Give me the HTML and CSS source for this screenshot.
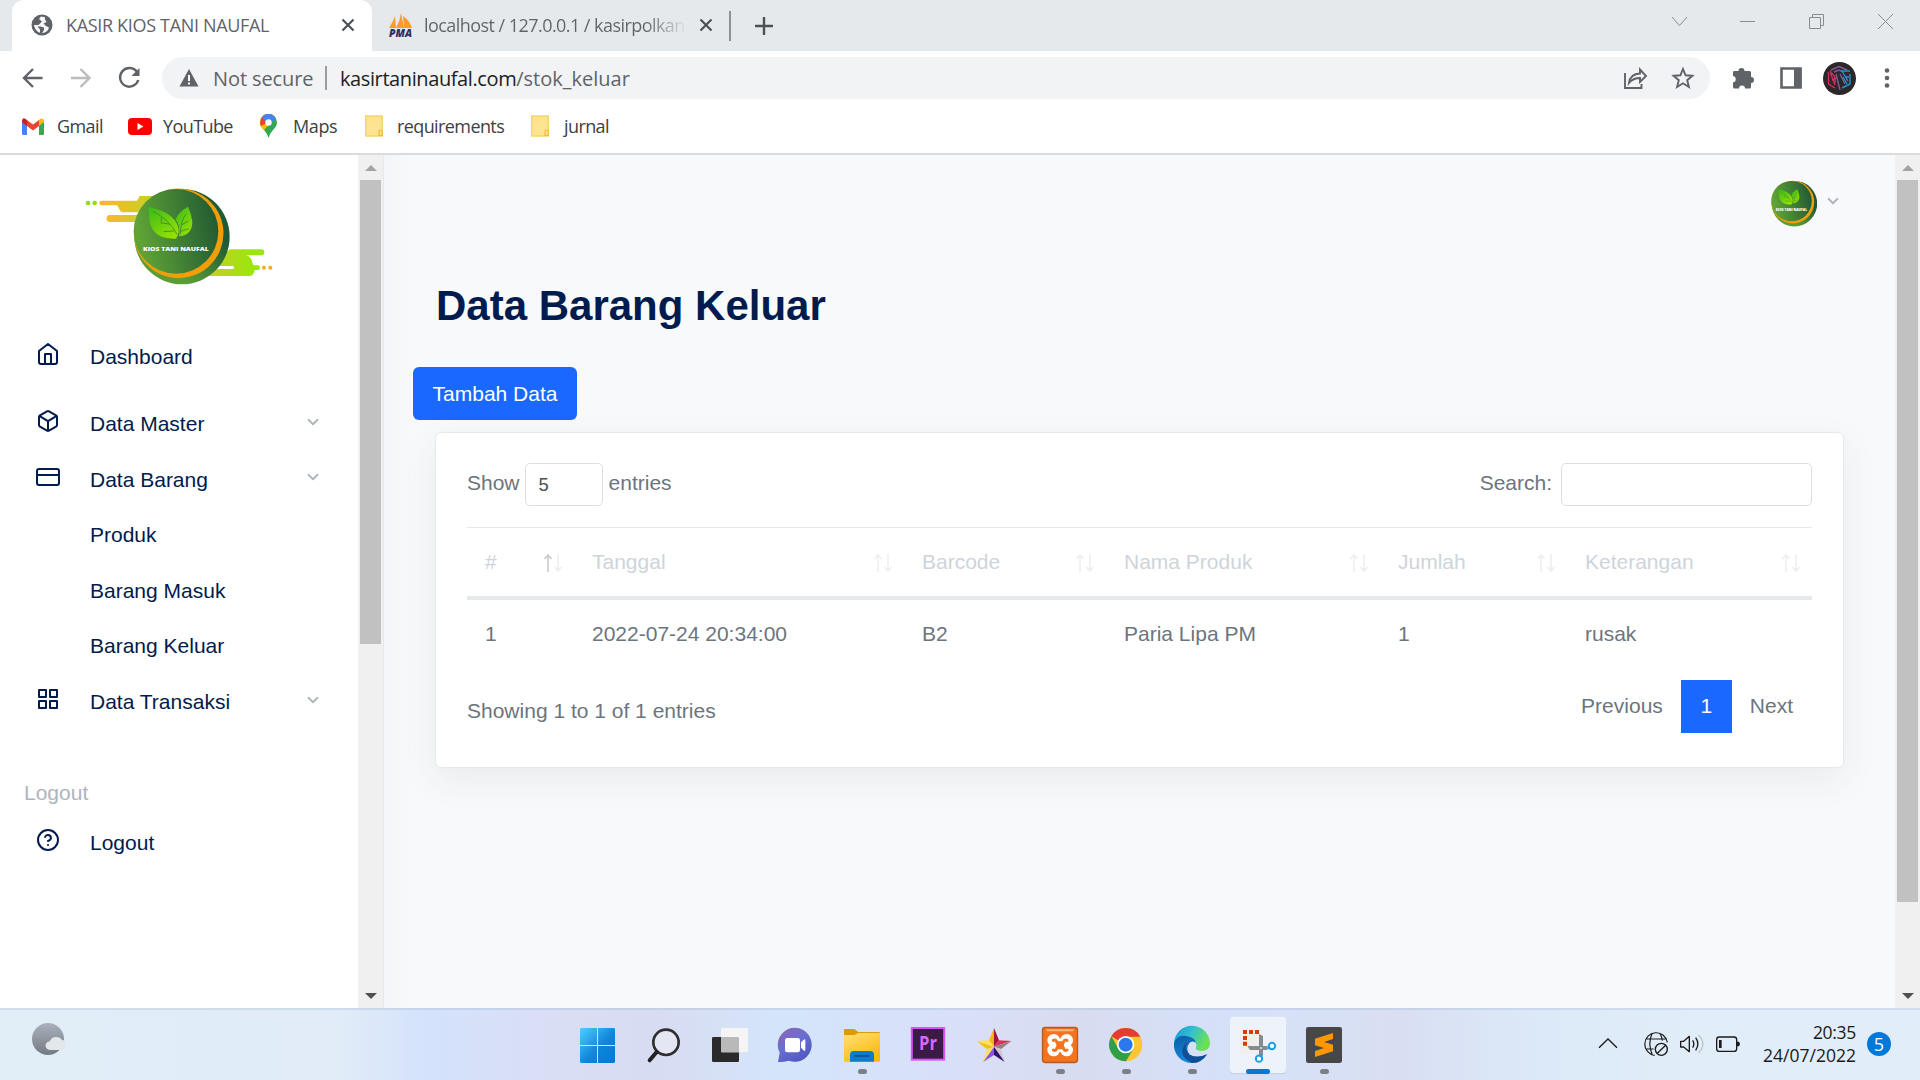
FILE: index.html
```html
<!DOCTYPE html>
<html lang="id">
<head>
<meta charset="utf-8">
<title>KASIR KIOS TANI NAUFAL</title>
<link rel="stylesheet" href="styles.css">
</head>
<body>
<svg class="defs" width="0" height="0" aria-hidden="true">
  <defs>
    <linearGradient id="green" x1="0" y1="0.2" x2="1" y2="0"><stop offset="0" stop-color="#5fa336"/><stop offset=".9" stop-color="#235c33"/></linearGradient>
    <linearGradient id="back" x1="0" y1="1" x2="1" y2="0"><stop offset="0.3" stop-color="#5a9c35"/><stop offset=".7" stop-color="#1d5a35"/></linearGradient>
    <linearGradient id="leaf" x1="0" y1="0" x2=".7" y2="1"><stop offset="0" stop-color="#36b81b"/><stop offset="1" stop-color="#94e004"/></linearGradient>
    <linearGradient id="splashL" x1="0" x2="1"><stop offset="0" stop-color="#fdb62f"/><stop offset="1" stop-color="#bfd424"/></linearGradient>
    <linearGradient id="splashR" x1="0" x2="1"><stop offset="0" stop-color="#d2c829"/><stop offset=".8" stop-color="#9be60f"/></linearGradient>
    <symbol id="badge" viewBox="400 113 292 290">
      <circle cx="547" cy="259" r="143" fill="url(#back)"/>
      <circle cx="537" cy="249" r="134.500" fill="#f09e0a"/>
      <circle cx="529" cy="243" r="127" fill="url(#green)"/>
      <path d="M446 169C492 180 530 197 537 236Q538 252 529 265Q452 268 448 200Z" fill="url(#leaf)"/>
      <path d="M565 169Q532 188 528 208Q543 225 538 258Q578 254 578 214Q575 190 565 169Z" fill="url(#leaf)"/>
      <path d="M460 183Q508 207 532 252M485 202V214M512 222L482 217M522 242L492 244M560 190Q542 210 542 252M545 224L566 212M544 243L568 235" fill="none" stroke="#3a8a1c" stroke-width="2.500"/>
      <text x="430" y="303" textLength="197" lengthAdjust="spacingAndGlyphs" class="badge-text">KIOS TANI NAUFAL</text>
    </symbol>
    <symbol id="chev" viewBox="0 0 24 24"><path d="M6 9l6 6 6-6" fill="none" stroke="currentColor" stroke-width="2.400" stroke-linecap="round" stroke-linejoin="round"/></symbol>
    <symbol id="folder" viewBox="0 0 18 22"><path d="M.8 1H17.2V21H.8Z" fill="#fee491" stroke="#f5d66b" stroke-width="1.500"/><path d="M14 20.500V16.500Q14 15 15.600 15T17.200 16.500V20.500Z" fill="#fee491" stroke="#e8bd38" stroke-width="1.200"/></symbol>
  </defs>
</svg>

<header class="browser">
  <div class="tabstrip">
    <div class="tab tab-active">
      <svg class="tab-icon" width="22" height="22" viewBox="0 0 22 22"><circle cx="11" cy="11" r="10.500" fill="#5f6368"/><path d="M10 2.500L8 5L11 7.500L7.500 11H2.800Q3.500 15 7 18L9 18.800V15.500L6.500 12.500H9.500L13 13.500V16L11 19.300Q17 18 18 13.500L15 12L12.500 9.500L15.500 8L14 5.500V3.200Z" fill="#fff" fill-opacity=".95"/></svg>
      <span class="tab-title t-kasir">KASIR KIOS TANI NAUFAL</span>
      <svg class="close" width="14" height="14" viewBox="0 0 14 14"><path d="M1.500 1.500l11 11M12.500 1.500l-11 11"/></svg>
    </div>
    <div class="tab tab-second">
      <svg class="pma" width="26" height="28" viewBox="0 0 26 28"><path d="M1 16Q5 10 7 4L8 16ZM8 16Q12 9 13 1L16 16ZM16 16L15 4Q22 9 24 16Z" fill="#f89c2c"/><text x="1" y="24.500" textLength="23" lengthAdjust="spacingAndGlyphs">PMA</text></svg>
      <span class="tab-title t-local">localhost / 127.0.0.1 / kasirpolkan</span>
      <svg class="close" width="14" height="14" viewBox="0 0 14 14"><path d="M1.500 1.500l11 11M12.500 1.500l-11 11"/></svg>
    </div>
    <span class="tab-sep"></span>
    <svg class="plus" width="18" height="18" viewBox="0 0 18 18"><path d="M9 0V18M0 9H18"/></svg>
    <svg class="window-buttons" width="248" height="51" viewBox="1660 0 248 51"><path d="M1672 17l7.500 8.500L1687 17M1740 21.500H1755M1809.500 17.500h11v11h-11zM1812.500 17v-2.500h11v11H1821M1878 14l15 15M1893 14l-15 15" fill="none" stroke="#888b90"/></svg>
  </div>
  <div class="toolbar">
    <svg class="nav" width="162" height="54" viewBox="0 51 162 54" fill="none" stroke="#5f6368" stroke-width="2.400"><path d="M42.500 78H24.500M33 69l-9 9 9 9"/><path d="M71 78H89M80.500 69l9 9-9 9" stroke="#babcbe"/><path d="M137 72A9.300 9.300 0 1 0 138.300 80"/><path d="M139.500 68v8h-8z" fill="#5f6368" stroke="none"/></svg>
    <div class="omnibox">
      <svg class="warn" width="20" height="18" viewBox="0 0 20 18"><path d="M10 0L19.500 17.500H.5Z" fill="#5f6368"/><path d="M10 6v6M10 13.500v2" stroke="#fff" stroke-width="2"/></svg>
      <span class="u-text u-secure">Not secure</span>
      <span class="u-sep"></span>
      <span class="u-text u-host">kasirtaninaufal.com</span><span class="u-text u-path">/stok_keluar</span>
      <svg class="omni-icons" width="90" height="42" viewBox="1620 57 90 42" fill="none" stroke="#5f6368" stroke-width="1.900"><path d="M1625 73V88H1641.500V84M1629 83Q1630 74 1640 73.500V69.500L1646 76L1640 82V78Q1633 78 1629 83Z"/><path d="M1683 69l2.600 6.300 6.800.5-5.200 4.400 1.700 6.800-5.900-3.700-5.900 3.700 1.700-6.800-5.200-4.400 6.800-.5z"/></svg>
    </div>
    <svg class="tools" width="210" height="54" viewBox="1710 51 210 54">
      <path d="M1734 71h4.500a3 3 0 0 1 6 0h5a1.500 1.500 0 0 1 1.500 1.500v4.500a3 3 0 0 1 0 6v4a1.500 1.500 0 0 1-1.500 1.500h-4.500a3 3 0 0 0-6 0h-4.500a1.500 1.500 0 0 1-1.500-1.500v-4.500a3.300 3.300 0 0 0 0-6.500v-3.500a1.500 1.500 0 0 1 1-1.500z" fill="#5f6368"/>
      <path d="M1781.500 68.500h19v19h-19z" fill="#fff" stroke="#5f6368" stroke-width="2.600"/><path d="M1794 68h7.500v20h-7.500z" fill="#5f6368"/>
      <circle cx="1839.500" cy="78.500" r="16.500" fill="#2c2728"/>
      <g fill="none" stroke-width="1.400"><path d="M1828.500 72V84L1835 88M1830.500 73L1835 85M1830 71L1835 77V83M1832 80L1836 78" stroke="#d52b5c"/><path d="M1831 70L1839 66.500L1847 70M1834 72L1839 70L1843 72M1836 74L1840 90M1840 74L1845 84" stroke="#86599f"/><path d="M1850 71H1842L1848 81M1850 74V84L1842 88M1843 77L1847 84M1849 77H1846" stroke="#2492d2"/></g>
      <g fill="#5f6368"><circle cx="1887" cy="70.500" r="2.300"/><circle cx="1887" cy="78" r="2.300"/><circle cx="1887" cy="85.500" r="2.300"/></g>
    </svg>
  </div>
  <nav class="bookmarks">
    <svg class="bm-gmail" width="22" height="17" viewBox="0 0 22 17"><path d="M0 3V15.500Q0 17 1.500 17H5V7Z" fill="#4285f4"/><path d="M22 3V15.500Q22 17 20.500 17H17V7Z" fill="#34a853"/><path d="M17 2V8L22 4V2.500Q21 -1 17.500 1.500Z" fill="#fbbc04"/><path d="M5 8V2L11 6.500L17 2V8L11 12.500Z" fill="#ea4335"/><path d="M0 2.500V4L5 8V2Q1-1.500 0 2.500Z" fill="#c5221f"/></svg>
    <span class="bm b-gmail">Gmail</span>
    <svg class="bm-yt" width="24" height="17" viewBox="0 0 24 17"><rect width="24" height="17" rx="4" fill="#f00"/><path d="M9.500 5v7l6-3.500z" fill="#fff"/></svg>
    <span class="bm b-yt">YouTube</span>
    <svg class="bm-maps" width="17" height="24" viewBox="0 0 17 24"><path d="M0 8.500A8.500 8.500 0 0 1 17 8.500Q17 12 13 16Q9.500 20 8.500 24Q7.500 20 4 16Q0 12 0 8.500Z" fill="#34a853"/><path d="M2 3A8.500 8.500 0 0 1 15.500 3.500L4 16Q0 12 0 8.500Z" fill="#fbbc04"/><path d="M2 3A8.500 8.500 0 0 1 15 3L5 10L1 12Q-1 7 2 3Z" fill="#ea4335"/><path d="M2 3A8.500 8.500 0 0 1 16 4.500L8.500 11L5.500 7.500Z" fill="#4285f4"/><circle cx="8.500" cy="8.500" r="3.200" fill="#fff"/></svg>
    <span class="bm b-maps">Maps</span>
    <svg class="bm-f1" width="18" height="22"><use href="#folder"/></svg>
    <span class="bm b-req">requirements</span>
    <svg class="bm-f2" width="18" height="22"><use href="#folder"/></svg>
    <span class="bm b-jur">jurnal</span>
  </nav>
</header>

<div class="page">
  <aside class="sidebar">
    <svg class="logo" width="192" height="98.300" viewBox="250 110 576 295">
      <g fill="url(#splashL)"><path d="M306 151H412L420 137H470V215H331a9 9 0 0 1 0-21H430V186H370Q362 186 357 172L352 165H306a7 7 0 0 1 0-14Z"/></g>
      <path d="M690 297H785a9 9 0 0 1 0 18H740Q756 320 758 337L762 345H774a7 7 0 0 1 0 14H765Q762 377 750 377H600V356H702V347H640Z" fill="url(#splashR)"/>
      <circle cx="265" cy="158" r="7" fill="#94dc0c"/><circle cx="285" cy="158" r="7" fill="#94dc0c"/><circle cx="793" cy="352" r="6" fill="#f0ad22"/><circle cx="812" cy="352" r="6" fill="#f0ad22"/>
      <use href="#badge" x="400" y="113" width="292" height="290"/>
    </svg>
    <nav class="menu">
      <a class="item first"><svg class="ico" viewBox="0 0 24 24"><path d="M3 9l9-7 9 7v11a2 2 0 0 1-2 2H5a2 2 0 0 1-2-2zM9 22V12h6v10"/></svg><span>Dashboard</span></a>
      <a class="item"><svg class="ico" viewBox="0 0 24 24"><path d="M21 16V8a2 2 0 0 0-1-1.730l-7-4a2 2 0 0 0-2 0l-7 4A2 2 0 0 0 3 8v8a2 2 0 0 0 1 1.730l7 4a2 2 0 0 0 2 0l7-4A2 2 0 0 0 21 16zM3.270 6.960L12 12.010l8.730-5.050M12 22.080V12"/></svg><span>Data Master</span><svg class="chev" width="18" height="18"><use href="#chev"/></svg></a>
      <a class="item"><svg class="ico" viewBox="0 0 24 24"><rect x="1" y="4" width="22" height="16" rx="2"/><path d="M1 10h22"/></svg><span>Data Barang</span><svg class="chev" width="18" height="18"><use href="#chev"/></svg></a>
      <a class="item sub"><span>Produk</span></a>
      <a class="item sub"><span>Barang Masuk</span></a>
      <a class="item sub"><span>Barang Keluar</span></a>
      <a class="item"><svg class="ico" viewBox="0 0 24 24"><path d="M3 3h7v7H3zM14 3h7v7h-7zM14 14h7v7h-7zM3 14h7v7H3z"/></svg><span>Data Transaksi</span><svg class="chev" width="18" height="18"><use href="#chev"/></svg></a>
      <div class="label">Logout</div>
      <a class="item"><svg class="ico" viewBox="0 0 24 24"><circle cx="12" cy="12" r="10"/><path d="M9.090 9a3 3 0 0 1 5.830 1c0 2-3 3-3 3M12 17h.01"/></svg><span>Logout</span></a>
    </nav>
  </aside>
  <div class="scrollbar side-scroll"><i class="up"></i><b class="thumb"></b><i class="down"></i></div>
  <main class="main">
    <div class="user"><svg width="46.500" height="47"><use href="#badge"/></svg><svg class="chev" width="18" height="18"><use href="#chev"/></svg></div>
    <h1>Data Barang Keluar</h1>
    <button class="btn">Tambah Data</button>
    <section class="card">
      <div class="controls">
        <span>Show</span><span class="select">5</span><span>entries</span>
        <span class="search-label">Search:</span><input class="search" type="text" aria-label="Search">
      </div>
      <table>
        <colgroup><col class="c1"><col class="c2"><col class="c3"><col class="c4"><col class="c5"><col class="c6"></colgroup>
        <thead><tr>
          <th><div><span>#</span><svg class="sort asc" viewBox="0 0 20 20"><path d="M5 19V2M1.500 6L5 2l3.500 4"/><path d="M15 1V18M11.500 14l3.500 4 3.500-4"/></svg></div></th>
          <th><div><span>Tanggal</span><svg class="sort" viewBox="0 0 20 20"><path d="M5 19V2M1.500 6L5 2l3.500 4"/><path d="M15 1V18M11.500 14l3.500 4 3.500-4"/></svg></div></th>
          <th><div><span>Barcode</span><svg class="sort" viewBox="0 0 20 20"><path d="M5 19V2M1.500 6L5 2l3.500 4"/><path d="M15 1V18M11.500 14l3.500 4 3.500-4"/></svg></div></th>
          <th><div><span>Nama Produk</span><svg class="sort" viewBox="0 0 20 20"><path d="M5 19V2M1.500 6L5 2l3.500 4"/><path d="M15 1V18M11.500 14l3.500 4 3.500-4"/></svg></div></th>
          <th><div><span>Jumlah</span><svg class="sort" viewBox="0 0 20 20"><path d="M5 19V2M1.500 6L5 2l3.500 4"/><path d="M15 1V18M11.500 14l3.500 4 3.500-4"/></svg></div></th>
          <th><div><span>Keterangan</span><svg class="sort" viewBox="0 0 20 20"><path d="M5 19V2M1.500 6L5 2l3.500 4"/><path d="M15 1V18M11.500 14l3.500 4 3.500-4"/></svg></div></th>
        </tr></thead>
        <tbody><tr><td>1</td><td>2022-07-24 20:34:00</td><td>B2</td><td>Paria Lipa PM</td><td>1</td><td>rusak</td></tr></tbody>
      </table>
      <div class="foot">
        <span class="info">Showing 1 to 1 of 1 entries</span>
        <div class="pager"><a>Previous</a><a class="on">1</a><a>Next</a></div>
      </div>
    </section>
  </main>
  <div class="scrollbar main-scroll"><i class="up"></i><b class="thumb"></b><i class="down"></i></div>
</div>

<footer class="taskbar">
  <svg class="weather" width="80" height="72" viewBox="0 144 240 216"><defs><linearGradient id="moon" x2="0" y2="1"><stop stop-color="#a9b2bc"/><stop offset="1" stop-color="#747a82"/></linearGradient></defs><circle cx="144" cy="237" r="48" fill="url(#moon)"/><path d="M150 270a13 13 0 0 1-1-26Q155 231 168 231T186 240Q198 240 198 254T185 270Z" fill="#e3e7ea"/></svg>
  <div class="apps">
    <svg class="app" viewBox="72 24 198 216"><defs><linearGradient id="win" x1="120" y1="84" x2="225" y2="189" gradientUnits="userSpaceOnUse"><stop stop-color="#4fd0ff"/><stop offset=".55" stop-color="#0f86dc"/><stop offset="1" stop-color="#0078d4"/></linearGradient></defs><path d="M123 84H171V135H120V87zM174 84H222L225 87V135H174zM120 138H171V189H123L120 186zM174 138H225V186L222 189H174z" fill="url(#win)"/></svg>
    <svg class="app" viewBox="270 24 198 216"><circle cx="378" cy="127" r="38" fill="#e4e7f3" stroke="#2e2e2e" stroke-width="8"/><path d="M350 156L329 181" stroke="#222" stroke-width="12" stroke-linecap="round"/></svg>
    <svg class="app" viewBox="468 24 198 216"><rect x="516" y="111" width="81" height="75" rx="4" fill="#2a2a2a"/><rect x="543" y="84" width="81" height="73" rx="3" fill="#f5f5f5"/><path d="M543 111H593Q597 111 597 115V157H546Q543 157 543 154Z" fill="#b9b9b9"/></svg>
    <svg class="app" viewBox="666 24 198 216"><defs><linearGradient id="chat" x2=".6" y2="1"><stop stop-color="#9162b0"/><stop offset=".5" stop-color="#6b6fd0"/><stop offset="1" stop-color="#5058c4"/></linearGradient></defs><path d="M714 186L719 158A51 51 0 1 1 746 182Q730 187 714 186Z" fill="url(#chat)"/><rect x="735" y="114" width="45" height="43" rx="7" fill="#fff"/><path d="M783 127L793 118Q796 118 796 122V149Q796 154 793 153L783 143Z" fill="#fff"/></svg>
    <svg class="app" viewBox="864 24 198 216"><defs><linearGradient id="fold" x2=".6" y2="1"><stop stop-color="#ffe07a"/><stop offset="1" stop-color="#fbb90c"/></linearGradient></defs><path d="M912 90Q912 87 916 87H943L955 96H1017Q1020 96 1020 100V120H912Z" fill="#dc9b05"/><path d="M912 105H943L955 99H1020V182Q1020 185 1017 185H915Q912 185 912 182Z" fill="url(#fold)"/><path d="M930 185V164Q930 153 941 153H991Q1002 153 1002 164V185Z" fill="#0f7bcd"/><path d="M945 168H986" stroke="#0b4d93" stroke-width="5" stroke-linecap="round"/><rect class="dot" x="954" y="207" width="27" height="15" rx="7.500"/></svg>
    <svg class="app" viewBox="1062 24 198 216"><rect x="1115.500" y="84" width="97" height="95" fill="#3a1b45" stroke="#d853f8" stroke-width="6"/><text x="1137" y="150" class="pr" textLength="54" lengthAdjust="spacingAndGlyphs">Pr</text></svg>
    <svg class="app" viewBox="0 24 198 216"><path d="M102 84V140L87 121Z" fill="#fbb215"/><path d="M102 84L117 121L102 140Z" fill="#a5123f"/><path d="M117 121L154 123L102 140Z" fill="#e53056"/><path d="M154 123L123 147L102 140Z" fill="#8a8485"/><path d="M123 147L134 186L102 140Z" fill="#cfc9cf"/><path d="M134 186L102 165V140Z" fill="#33106e"/><path d="M102 165L69 186L102 140Z" fill="#8b54dc"/><path d="M69 186L81 147L102 140Z" fill="#fce060"/><path d="M81 147L50 123L102 140Z" fill="#f6bd16"/><path d="M50 123L87 121L102 140Z" fill="#ffe34e"/></svg>
    <svg class="app" viewBox="198 24 198 216"><rect x="247.500" y="82.500" width="105" height="105" rx="8" fill="#f4731f" stroke="#b85a22" stroke-width="4"/><path d="M257 88H343L338 94H262Z" fill="#ffb37d"/><g fill="#fff"><circle cx="281" cy="121" r="19"/><circle cx="320" cy="121" r="19"/><circle cx="281" cy="150" r="19"/><circle cx="320" cy="150" r="19"/><path d="M284 116H317V156H284Z"/></g><path d="M293 100H308L301 113ZM293 172H308L301 159Z" fill="#f4731f"/><path d="M280 121Q288 117 291 128H310Q313 117 321 121M280 150Q288 155 291 143H310Q313 155 321 150" fill="none" stroke="#f4731f" stroke-width="9" stroke-linecap="round" stroke-linejoin="round"/><path d="M289 127H312V144H289Z" fill="#f4731f"/><rect class="dot" x="288" y="207" width="27" height="15" rx="7.500"/></svg>
    <svg class="app" viewBox="396 24 198 216"><circle cx="497" cy="134" r="50" fill="#fcc532"/><path d="M497 134L454 109A50 50 0 0 1 541 110H497Z" fill="#e23d30"/><path d="M454 109A50 50 0 0 0 498 184L519 147L476 147Z" fill="#2f9f49"/><circle cx="497" cy="134" r="26" fill="#fff"/><circle cx="497" cy="134" r="21" fill="#2a78ee"/><rect class="dot" x="486" y="207" width="27" height="15" rx="7.500"/></svg>
    <svg class="app" viewBox="594 24 198 216"><defs><linearGradient id="edge" x2="1" y2=".4"><stop stop-color="#1593d5"/><stop offset=".5" stop-color="#33bfd2"/><stop offset="1" stop-color="#6be152"/></linearGradient><linearGradient id="edge2" x2=".3" y2="1"><stop stop-color="#0d5da8"/><stop offset="1" stop-color="#1589dd"/></linearGradient></defs><path d="M642 130A54 54 0 0 1 750 132Q748 154 723 153Q704 152 708 142Q714 124 692 120Q660 110 642 130Z" fill="url(#edge)"/><path d="M642 130Q650 104 678 108Q706 112 708 129Q700 120 689 128Q675 145 689 164Q712 178 740 164Q724 188 696 189A54 54 0 0 1 642 130Z" fill="url(#edge2)"/><path d="M683 127Q669 145 689 164Q712 176 742 162Q724 190 696 189Q658 170 670 142Q674 130 683 127Z" fill="#124e96"/><rect class="dot" x="684" y="207" width="27" height="15" rx="7.500"/></svg>
    <svg class="app" viewBox="792 24 198 216"><rect x="810" y="52" width="168" height="171" rx="11" fill="#c9d1e4"/><rect x="810" y="50" width="168" height="169" rx="11" fill="#eef2fb"/><rect x="840" y="84" width="66" height="77" rx="5" fill="#f0efee"/><path d="M849 96H861M867 96H879M885 96H897M849 114H861M849 131H861" stroke="#d83b01" stroke-width="12"/><path d="M897 102L909 108V167H897ZM862 138H922V150H870Z" fill="#868b91"/><circle cx="936" cy="138" r="9.500" fill="#fff" stroke="#1d9fe4" stroke-width="6"/><circle cx="897" cy="176" r="9.500" fill="#fff" stroke="#1d9fe4" stroke-width="6"/><path d="M922 144H930M903 164V172" stroke="#1d9fe4" stroke-width="8"/><circle cx="903" cy="144" r="3" fill="#ddd"/><rect x="858" y="207" width="72" height="15" rx="7" fill="#0078d7"/></svg>
    <svg class="app" viewBox="990 24 198 216"><rect x="1038" y="81" width="108" height="108" rx="7" fill="#474747"/><path d="M1065 116L1119 99V117L1092 126L1119 134V154L1065 171V153L1092 144L1065 136Z" fill="#ff9800"/><rect class="dot" x="1080" y="207" width="27" height="15" rx="7.500"/></svg>
  </div>
  <svg class="tray" width="160" height="72" viewBox="90 384 480 216" fill="none" stroke="#1b1b1b" stroke-width="4"><path d="M117 503L144 477L171 503"/><path d="M284 526A34 34 0 1 1 322 487M277 525Q262 490 277 459M299 459Q306 470 307 482M258 477H318M258 507H281" stroke-width="3.500"/><circle cx="304" cy="508" r="18"/><path d="M292 520L317 496"/><path d="M362 484H371L388 469V515L371 501H362ZM398 481Q405 492 398 503M407 473Q420 492 407 511" stroke-linejoin="round"/><path d="M416 465Q441 492 416 519" stroke="#bfc6cc"/><rect x="470" y="471" width="60" height="43" rx="8"/><path d="M481 480V504" stroke-width="8"/><path d="M531 487H536Q540 492 536 497H531Z" fill="#1b1b1b"/></svg>
  <div class="clock"><span class="k-time">20:35</span><span class="k-date">24/07/2022</span></div>
  <span class="notif">5</span>
</footer>
</body>
</html>
```
FILE: styles.css
```css
* { box-sizing: border-box; }
body {
  margin: 0;
  width: 1920px;
  height: 1080px;
  overflow: hidden;
  display: flex;
  flex-direction: column;
  font: 21px/30px "Liberation Sans", Arial, sans-serif;
  color: #6c757d;
  background: #fff;
}
svg { display: block; flex: none; }
.defs { position: absolute; }
.badge-text { font: 800 17px "Open Sans", sans-serif; fill: #fff; }

/* browser chrome */
.browser { height: 155px; border-bottom: 2px solid #dadbdd; font-family: "Open Sans", "Noto Sans", sans-serif; flex: none; }
.tabstrip { height: 51px; background: #e5e9ec; display: flex; align-items: center; padding-left: 12px; }
.tab { height: 51px; display: flex; align-items: center; font-size: 18px; color: #5f6368; padding-bottom: 1px; }
.tab-active { width: 360px; background: #fff; border-radius: 12px 12px 0 0; padding-left: 19px; }
.tab-title { white-space: nowrap; margin-left: 13px; }
.t-kasir { width: 262px; letter-spacing: -0.33px; }
.tab-second { width: 357px; padding-left: 16px; }
.pma { margin-top: 1px; overflow: visible; }
.pma text { font: italic 800 10px/1 "Open Sans", sans-serif; fill: #2f2e62; }
.t-local { width: 262px; margin-left: 10px; letter-spacing: -0.55px; background: linear-gradient(90deg, #5f6368 84%, #e0e3e6 100%); -webkit-background-clip: text; background-clip: text; color: transparent; }
.close { margin-left: 13px; stroke: #4d5156; stroke-width: 2.2; }
.tab-sep { width: 2px; height: 30px; background: #8e9297; }
.plus { margin-left: 24px; stroke: #4d5156; stroke-width: 2.4; }
.window-buttons { margin-left: auto; margin-right: 12px; }
.toolbar { height: 54px; display: flex; align-items: center; }
.omnibox { width: 1548px; height: 42px; border-radius: 21px; background: #f1f3f4; display: flex; align-items: center; padding-left: 17px; font-size: 20px; color: #5f6368; }
.u-text { white-space: nowrap; padding-top: 1px; }
.u-secure { width: 112px; margin-left: 14px; letter-spacing: -0.1px; }
.u-sep { width: 2px; height: 24px; background: #9a9ea2; margin-right: 13px; }
.u-host { color: #202124; letter-spacing: -0.4px; }
.u-path { letter-spacing: 0; }
.omni-icons { margin-left: auto; }
.bookmarks { height: 48px; display: flex; align-items: center; padding: 0 0 6px 22px; font-size: 18px; color: #3c4043; }
.bm { white-space: nowrap; letter-spacing: -0.6px; padding-bottom: 1px; }
.b-gmail { width: 71px; margin-left: 13px; }
.b-yt { width: 97px; margin-left: 11px; }
.b-maps { width: 72px; margin-left: 16px; letter-spacing: -0.4px; }
.b-req { width: 134px; margin-left: 14px; }
.b-jur { margin-left: 15px; }

/* page */
.page { flex: 1; min-height: 0; display: flex; background: #f8f9fb; }
.sidebar { width: 358px; background: #fff; color: #001b4e; }
.logo { margin: 32px 0 0 83px; }
.menu { margin-top: 44px; display: flex; flex-direction: column; }
.item { height: 55.6px; display: flex; align-items: center; padding-left: 36px; }
.item.first { margin-bottom: 11.4px; }
.item.sub { padding-left: 90px; }
.ico { width: 24px; height: 24px; margin: 0 30px 6px 0; fill: none; stroke: #001b4e; stroke-width: 2; stroke-linecap: round; stroke-linejoin: round; }
.chev { color: #adb5bd; }
.item .chev { margin: 0 36px 5px auto; }
.label { color: #adb5bd; padding-left: 24px; margin: 48px 0 7px; }

.scrollbar { width: 25px; background: #f0f0f0; display: flex; flex-direction: column; align-items: center; justify-content: space-between; padding: 10px 0 9px; }
.scrollbar i { border: 6px solid transparent; flex: none; }
.up { border-top: 0 !important; border-bottom-color: #a3a3a3 !important; }
.down { border-bottom: 0 !important; border-top-color: #505050 !important; }
.thumb { width: 21px; background: #c1c1c1; margin-top: 9px; flex: none; }
.side-scroll .thumb { height: 464px; margin-bottom: auto; }
.main-scroll .thumb { height: 722px; margin-bottom: auto; }
.main { flex: 1; border-left: 1px solid #e5e8ec; background: linear-gradient(90deg, #f3f5f8, #f8f9fb 30px); padding: 25px 51px 0 51px; display: flex; flex-direction: column; }
.user { display: flex; align-items: center; gap: 7px; align-self: flex-end; margin-right: 2px; }
.user .chev { margin-bottom: 5px; }
h1 { font-size: 42px; line-height: 50px; font-weight: 700; color: #001b4e; margin: 54px 0 0 1px; }
.btn { font: inherit; width: 164px; height: 53px; border: 0; border-radius: 6px; background: #1a68ff; color: #fff; padding: 0; margin: 36px 0 12px -22px; }
.card { background: #fff; border: 1px solid #e5e9ec; border-radius: 6px; height: 336px; width: 1409px; padding: 30px 31px; box-shadow: 0 12px 36px rgba(40, 50, 60, .07); }
.controls { height: 43px; display: flex; align-items: center; }
.controls > span { margin-bottom: 3px; }
.controls .select { width: 78px; height: 43px; border: 1px solid #dbdfe3; border-radius: 5px; margin: 0 6px 0 5px; padding: 6px 13px; font-size: 18.4px; color: #495057; }
.search-label { margin-left: auto; }
.search { width: 251px; height: 43px; border: 1px solid #dbdfe3; border-radius: 5px; margin-left: 9px; background: #fff; }
table { width: 1345px; table-layout: fixed; border-collapse: separate; border-spacing: 0; margin-top: 21px; }
.c1 { width: 107px; } .c2 { width: 330px; } .c3 { width: 202px; } .c4 { width: 274px; } .c5 { width: 187px; } .c6 { width: 245px; }
th { height: 73px; padding: 0 11px 0 18px; border-top: 1px solid #e5e9ec; border-bottom: 4px solid #e5e9ec; color: #ced4da; font-weight: 400; text-align: left; }
th div { display: flex; align-items: center; justify-content: space-between; }
.sort { width: 20px; height: 20px; fill: none; stroke: #eceef1; stroke-width: 1.5; margin-top: 2px; }
.asc path:first-child { stroke: #c4cad0; }
td { height: 69px; padding: 0 18px 2px; }
.foot { display: flex; justify-content: space-between; }
.info { margin-top: 27px; }
.pager { display: flex; height: 53px; line-height: 52px; margin: 11px 1px 0 0; }
.pager a { padding: 0 18px; }
.pager .on { width: 51px; background: #1a68ff; color: #fff; padding: 0; text-align: center; }

/* taskbar */
.taskbar { height: 72px; flex: none; display: flex; align-items: center; background: linear-gradient(90deg, #e1edf7 0, #e1ecf8 340px, #d4e2fb 425px, #d9def5 560px, #d8dcf2 660px, #d4e5fa 780px, #d8e0f8 940px, #d8dcf1 1080px, #d5e1f8 1230px, #d9dff3 1400px, #dce9f8 1540px, #e1edf8 1700px); box-shadow: inset 0 2px rgba(150, 170, 200, .25); font-family: "Open Sans", "Noto Sans", sans-serif; color: #1b1b1b; }
.apps { display: flex; margin-left: 484px; }
.app { width: 66px; height: 72px; }
.dot { fill: #7b8088; }
.pr { font: 700 56px "Open Sans", sans-serif; fill: #d966fb; }
.tray { margin-left: 234px; }
.clock { width: 106px; display: flex; flex-direction: column; align-items: flex-end; font-size: 17.5px; line-height: 23px; letter-spacing: -0.3px; padding-bottom: 1px; }
.k-date { letter-spacing: 0; }
.notif { width: 24px; height: 24px; margin-left: 11px; border-radius: 50%; background: #0078d7; color: #fff; font-size: 18px; line-height: 24px; text-align: center; }
```
